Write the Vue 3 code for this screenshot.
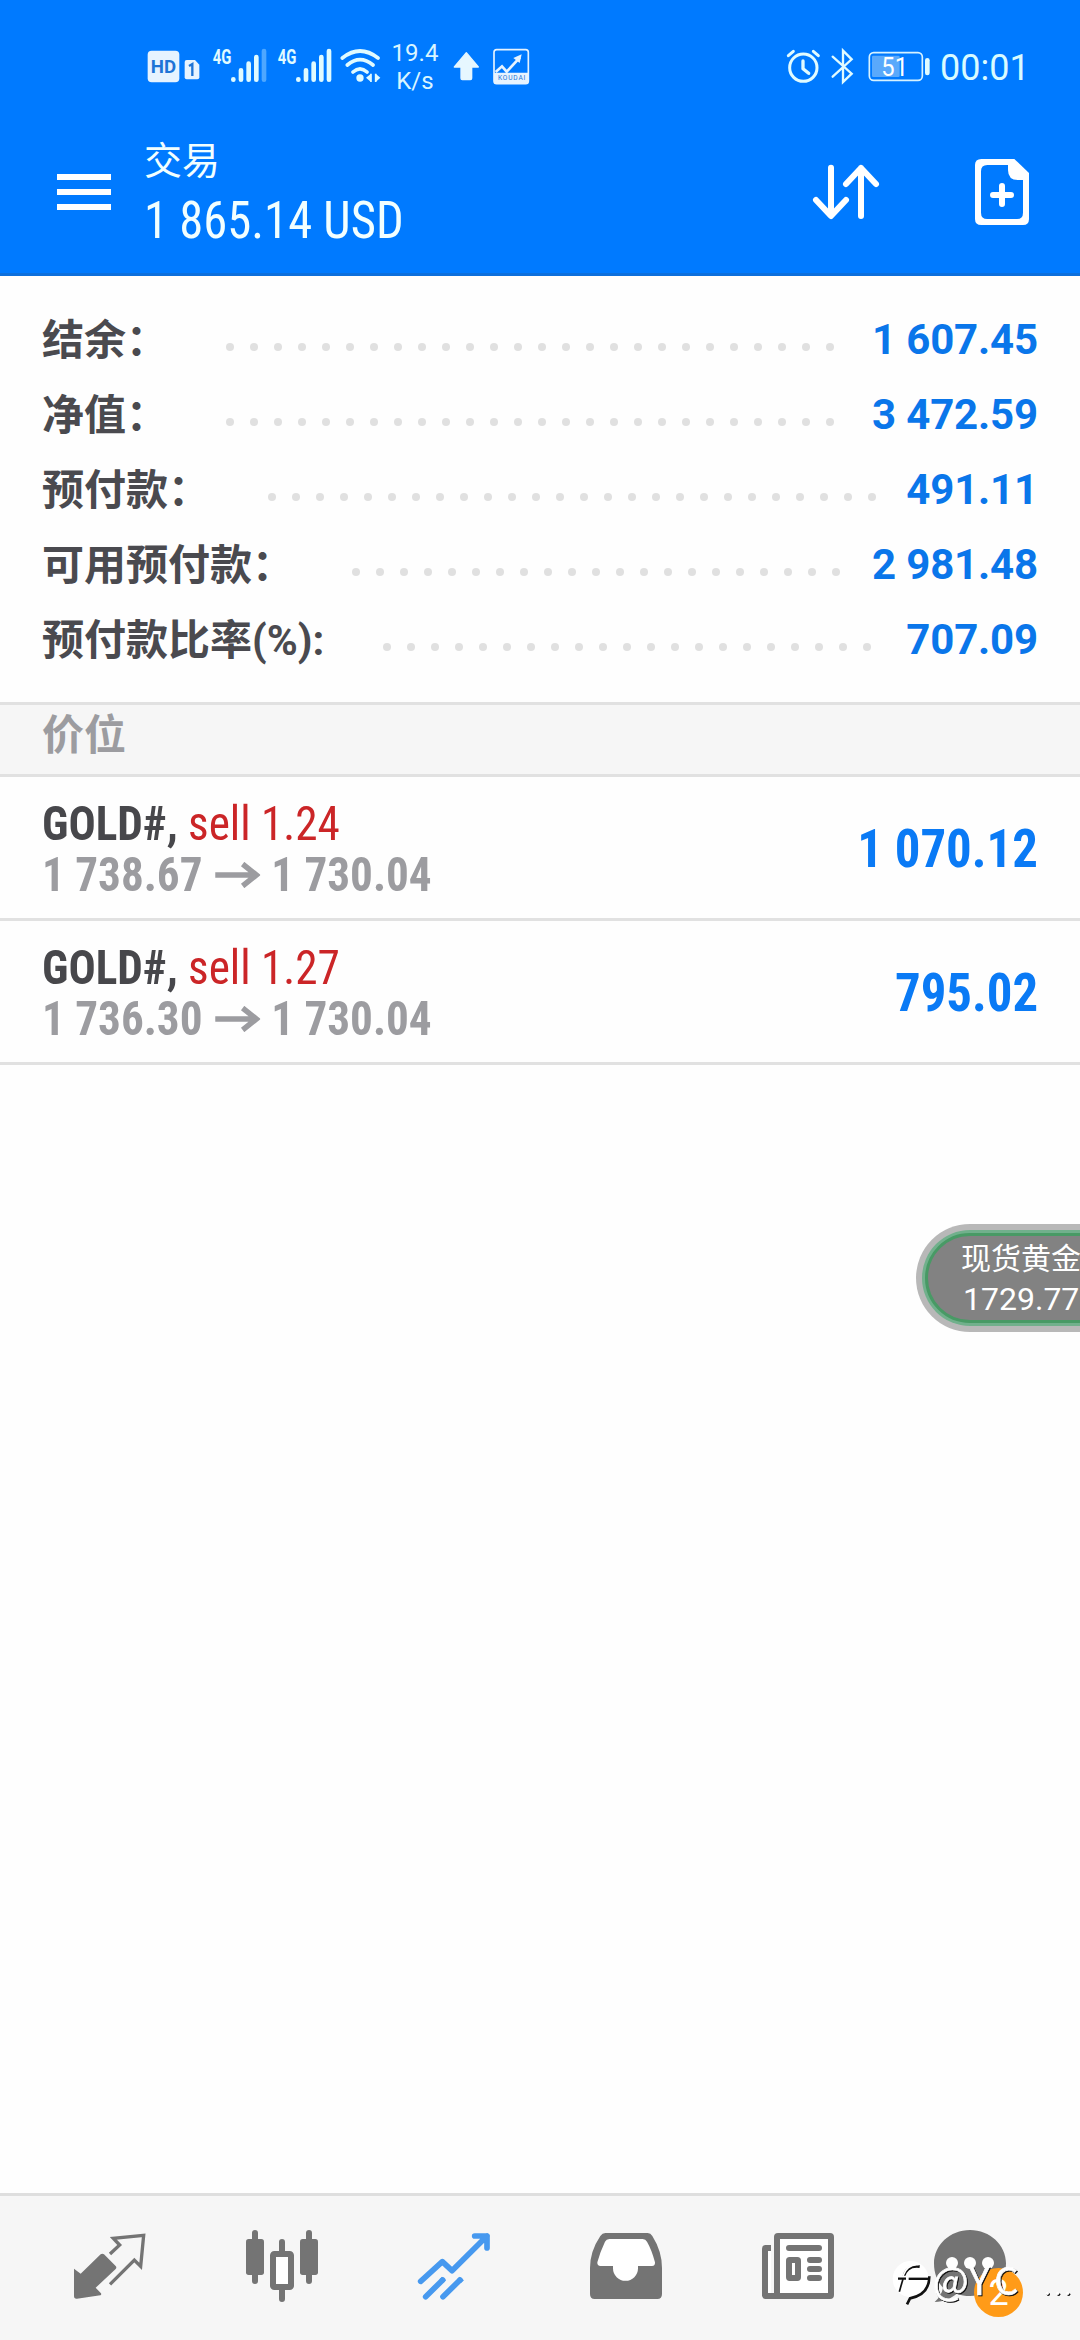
<script setup>
const summary = [
  { label: '结余：', value: '1 607.45', dots: 26, labelWidth: 184 },
  { label: '净值：', value: '3 472.59', dots: 26, labelWidth: 184 },
  { label: '预付款：', value: '491.11', dots: 26, labelWidth: 226 },
  { label: '可用预付款：', value: '2 981.48', dots: 21, labelWidth: 310 },
  { label: '预付款比率(%):', value: '707.09', dots: 21, labelWidth: 341 },
]
const positions = [
  { symbol: 'GOLD#,', side: 'sell 1.24', from: '1 738.67', to: '1 730.04', profit: '1 070.12' },
  { symbol: 'GOLD#,', side: 'sell 1.27', from: '1 736.30', to: '1 730.04', profit: '795.02' },
]
</script>

<template>
  <div class="screen">
    <header class="top">
      <div class="status">
        <svg class="hd" width="57" height="70" viewBox="45 0 171 210">
          <rect x="53" y="62" width="95" height="95" rx="12" fill="#e6f3ff" />
          <text x="100.500" y="129" font-size="56" font-weight="700" text-anchor="middle" textLength="76" lengthAdjust="spacingAndGlyphs" fill="#1e74d6">HD</text>
          <path d="M170 90h25l13 14v38q0 6-6 6h-32q-6 0-6-6v-46q0-6 6-6z" fill="#e6f3ff" />
          <path d="M177 108l10-6v36" fill="none" stroke="#1e74d6" stroke-width="7" />
        </svg>
        <svg v-for="n in 2" :key="n" class="signal" width="55" height="70" viewBox="246 0 165 210">
          <text x="248" y="101" font-size="60" font-weight="700" textLength="56" lengthAdjust="spacingAndGlyphs" fill="#e0fbff">4G</text>
          <g stroke="#e0fbff" stroke-width="14" stroke-linecap="round">
            <path d="M310 148v1M333 121v28M356 101v48M379 81v68" />
            <path d="M402 63v86" :opacity="n === 1 ? 0.35 : 1" />
          </g>
        </svg>
        <svg class="wifi" width="42" height="70" viewBox="630 0 126 210">
          <g fill="none" stroke="#e0fbff" stroke-width="11" stroke-linecap="round">
            <path d="M637 84Q690 42 744 84M652 105Q690 73 729 105M669 126Q690 107 711 126" />
          </g>
          <circle cx="690" cy="144" r="11" fill="#e0fbff" />
          <path d="M708 143l15-12v25zM737 131l14 12-14 13z" fill="#e0fbff" />
          <path d="M723 131v25M737 131v25" stroke="#e0fbff" stroke-width="5" />
        </svg>
        <div class="speed"><span>19.4</span><span>K/s</span></div>
        <svg class="upload" width="28" height="70" viewBox="966 0 84 210">
          <path d="M1009 68l36 43h-20v34q0 4-4 4h-24q-4 0-4-4v-34h-20z" fill="#e6f7ff" stroke="#e6f7ff" stroke-width="4" stroke-linejoin="round" />
        </svg>
        <svg class="koudai" width="37" height="70" viewBox="1089 0 111 210">
          <rect x="1092" y="59" width="103" height="102" rx="8" fill="none" stroke="#e6f3ff" stroke-width="5" />
          <path d="M1092 128h103v27q0 7-7 7h-89q-7 0-7-7z" fill="#e6f3ff" />
          <path d="M1097 126l19-17 14 16 40-43" fill="none" stroke="#e6f3ff" stroke-width="8" />
          <path d="M1150 84l25-11-6 26z" fill="#e6f3ff" />
          <text x="1145" y="150" font-size="20" text-anchor="middle" textLength="82" fill="#1e74d6">KOUDAI</text>
        </svg>
        <svg class="alarm" width="35" height="70" viewBox="78 0 105 210">
          <circle cx="130" cy="113" r="41" fill="none" stroke="#e0fbff" stroke-width="9" />
          <path d="M129 93v23l17 14" fill="none" stroke="#e0fbff" stroke-width="10" stroke-linecap="round" stroke-linejoin="round" />
          <path d="M85 77l15-13M160 64l15 13" stroke="#e0fbff" stroke-width="9" stroke-linecap="round" />
        </svg>
        <svg class="bt" width="25" height="70" viewBox="210 0 75 210">
          <path d="M218 80l57 51-26 25V62l26 26-57 52" fill="none" stroke="#e0fbff" stroke-width="7" stroke-linecap="round" />
        </svg>
        <svg class="battery" width="63" height="70" viewBox="324 0 189 210">
          <rect x="328" y="68" width="159" height="83" rx="13" fill="none" stroke="#d6f2ff" stroke-width="5" />
          <rect x="336" y="77" width="83" height="64" rx="4" fill="#5aa9fb" />
          <path d="M502 91v38" stroke="#e0fbff" stroke-width="14" stroke-linecap="round" />
          <text x="404" y="138" font-size="80" text-anchor="middle" textLength="80" lengthAdjust="spacingAndGlyphs" fill="#fff">51</text>
        </svg>
        <span class="clock">00:01</span>
      </div>
      <div class="toolbar">
        <div class="menu"><i></i><i></i><i></i></div>
        <div class="title">
          <span class="name">交易</span>
          <span class="equity cond">1 865.14 USD</span>
        </div>
        <svg class="sort" width="70" height="70" viewBox="93 81 210 210">
          <path d="M153 113v144M108 210l45 48 45-48M243 258V114M198 162l45-48 45 48" fill="none" stroke="#fff" stroke-width="18" stroke-linecap="round" stroke-linejoin="round" />
        </svg>
        <svg class="add" width="70" height="70" viewBox="561 81 210 210">
          <path d="M604 87h99l44 42v138q0 18-18 18H604q-19 0-19-18V105q0-18 19-18z" fill="#fff" />
          <path d="M622 105h62v15q0 30 30 30h15v98q0 19-18 19h-89q-19 0-19-19V124q0-19 19-19z" fill="#007aff" />
          <path d="M639 195h54M666 168v54" stroke="#fff" stroke-width="18" stroke-linecap="round" />
        </svg>
      </div>
    </header>

    <section class="summary">
      <div v-for="row in summary" :key="row.label" class="line">
        <span class="label" :style="{ width: row.labelWidth + 'px' }">{{ row.label }}</span>
        <span class="dots"><i v-for="d in row.dots" :key="d"></i></span>
        <span class="value">{{ row.value }}</span>
      </div>
    </section>

    <h2 class="section">价位</h2>
    <article v-for="p in positions" :key="p.profit" class="position">
      <div class="info cond">
        <div class="deal"><b>{{ p.symbol }}</b> <span>{{ p.side }}</span></div>
        <div class="prices">
          <span>{{ p.from }}</span>
          <svg width="48" height="26" viewBox="0 0 46 26" preserveAspectRatio="none"><path d="M0 13h42M28 2l14 11-14 11" fill="none" stroke="#9c9ca0" stroke-width="5.500" /></svg>
          <span>{{ p.to }}</span>
        </div>
      </div>
      <div class="profit cond">{{ p.profit }}</div>
    </article>

    <div class="ticker">
      <div class="ring"><div class="core">
        <span class="tname">现货黄金</span>
        <span class="tval">1729.77</span>
      </div></div>
    </div>

    <nav class="tabs">
      <svg viewBox="75 120 270 270">
        <path d="M102 266l20 15 60-58q5-4 10 0l35 35q4 5 0 9l-60 56 16 17q2 4-2 6l-70 10q-9 1-9-8z" fill="#747474" />
        <path d="M210 222l29-27-19-20 91-9-9 93-19-19-73 73" fill="none" stroke="#747474" stroke-width="10" />
      </svg>
      <svg viewBox="591 120 270 270" fill="#747474">
        <path d="M645 159v144M807 159v144M726 186v30M726 325v32" stroke="#747474" stroke-width="18" stroke-linecap="round" />
        <rect x="618" y="177" width="54" height="108" rx="8" /><rect x="780" y="177" width="54" height="108" rx="8" />
        <rect x="699" y="222" width="54" height="99" rx="4" fill="#fff" stroke="#747474" stroke-width="18" />
      </svg>
      <svg viewBox="1107 120 270 270">
        <path d="M1142 304l65-59 29 27 105-104M1304 168h37v36M1157 350l51-50M1209 350l51-50" fill="none" stroke="#4799ef" stroke-width="17" stroke-linecap="round" stroke-linejoin="round" />
        <path d="M1206 290l12 11-8 8-12-11zM1258 290l14 11-9 8-12-11z" fill="#4799ef" />
      </svg>
      <svg viewBox="63 120 270 270">
        <path d="M136 159h127q9 0 14 9 29 46 29 96v78q0 15-14 15H104q-14 0-14-15v-78q0-50 31-96 6-9 15-9z" fill="#747474" />
        <path d="M148 177h100q9 0 13 8 14 24 24 62 1 11-9 11h-42v7a37 37 0 0 1-75 0v-7h-37q-11 0-10-11 9-33 23-62 4-8 13-8z" fill="#fff" />
      </svg>
      <svg viewBox="579 120 270 270">
        <rect x="606" y="195" width="60" height="162" rx="11" fill="#747474" />
        <path d="M624 213h18v126h-18z" fill="#fff" /><path d="M633 190h9v149h-9z" fill="#f6f6f6" />
        <rect x="651" y="168" width="162" height="180" rx="3" fill="#fff" stroke="#747474" stroke-width="18" />
        <path d="M687 204h90M750 240h27M750 267h27M750 294h27" stroke="#747474" stroke-width="18" stroke-linecap="round" />
        <rect x="687" y="240" width="27" height="54" rx="2" fill="#fff" stroke="#747474" stroke-width="18" />
      </svg>
      <svg viewBox="1095 120 270 270">
        <path d="M1230 150c60 0 108 45 108 100s-48 98-108 98c-14 0-28-2-40-7-18 15-38 24-66 25 14-13 22-27 25-43-17-18-27-43-27-73 0-55 48-100 108-100z" fill="#747474" />
        <g fill="#fff"><circle cx="1176" cy="249" r="18" /><circle cx="1230" cy="249" r="18" /><circle cx="1284" cy="249" r="18" /></g>
      </svg>
      <span class="badge">2</span>
      <svg class="credit" width="187" height="80" viewBox="999 190 561 240">
        <circle cx="1052" cy="298" r="54" fill="#fff" />
        <g fill="none" stroke="#111">
          <path d="M1079 261Q1040 256 1031 292M1014 296h24M1046 297h62M1108 290Q1108 345 1050 356L1041 374" stroke-width="8" />
          <path d="M1029 298L1018 336" stroke-width="5" />
        </g>
        <path d="M1076 255Q1042 252 1029 288M1012 291h92" fill="none" stroke="#fff" stroke-width="5" />
        <g class="mark">
          <text x="1118" y="345">@</text><text x="1228" y="345">Y</text><text x="1303" y="345">C</text>
        </g>
        <g fill="#111"><circle cx="1465" cy="344" r="5" /><circle cx="1496" cy="344" r="5" /><circle cx="1526" cy="344" r="5" /></g>
        <g fill="#fff"><circle cx="1462" cy="341" r="5" /><circle cx="1493" cy="341" r="5" /><circle cx="1523" cy="341" r="5" /></g>
      </svg>
    </nav>
  </div>
</template>

<style>
body { margin: 0; background: #fefefe; }
</style>

<style scoped>
.screen { position: relative; display: flex; flex-direction: column; width: 1080px; height: 2340px; overflow: hidden; background: #fefefe; font-family: Roboto, "Noto Sans CJK SC", sans-serif; }
.screen * { box-sizing: border-box; }
svg { display: block; flex: none; }
.cond { font-stretch: 75%; white-space: pre; transform: scaleX(0.941); transform-origin: left; }
.top { height: 276px; flex: none; background: #007aff; border-bottom: 3px solid #0d6fdc; color: #f2ffff; }
.status { display: flex; height: 130px; padding: 30px 0 0 145px; }
.signal { margin-left: 10px; }
.wifi { margin-left: 8px; }
.speed { display: flex; flex-direction: column; width: 54px; margin: 9px 0 0 6px; text-align: center; font-size: 24px; line-height: 28px; color: #d9f5ff; }
.upload { margin-left: 10px; }
.koudai { margin-left: 13px; }
.alarm { margin-left: 256px; }
.bt { margin-left: 9px; }
.battery { margin-left: 13px; }
.clock { margin-left: 9px; height: 70px; font-size: 36px; line-height: 76px; color: #d9fbff; }
.toolbar { display: flex; height: 143px; padding-left: 57px; }
.menu { display: flex; flex: none; flex-direction: column; gap: 9px; width: 54px; padding-top: 44px; }
.menu i { height: 6px; background: #fff; }
.title { display: flex; flex: none; flex-direction: column; width: 660px; padding: 8px 0 0 33px; }
.name { font-size: 38px; line-height: 46px; }
.equity { font-size: 52px; line-height: 60px; padding-top: 7px; transform: scaleX(0.936); }
.sort { margin: 27px 0 0 40px; }
.add { margin: 27px 0 0 86px; }
.summary { height: 426px; flex: none; padding: 26px 42px 0; }
.line { display: flex; align-items: center; height: 75px; font-size: 42px; font-weight: 700; line-height: 75px; }
.label { flex: none; padding-top: 2px; color: #4a4a4f; white-space: nowrap; }
.dots { display: flex; gap: 16px; padding-top: 15px; }
.dots i { width: 8px; height: 8px; border-radius: 50%; background: #e0e0e0; }
.value { margin-left: auto; color: #0a76ea; letter-spacing: -0.15px; white-space: pre; }
.section { flex: none; height: 75px; margin: 0; padding-left: 42px; border: solid #e1e1e1; border-width: 3px 0; background: #f6f6f6; color: #9c9ca0; font-size: 42px; line-height: 61px; font-weight: 700; }
.position { display: flex; justify-content: space-between; flex: none; height: 144px; padding: 21px 42px 0; border-bottom: 3px solid #e1e1e1; font-size: 48px; line-height: 51px; }
.deal { color: #cb2527; }
.deal b { color: #47474b; }
.prices { display: flex; align-items: center; color: #9c9ca0; font-weight: 700; }
.prices svg { margin: 0 12px 0 13px; }
.profit { color: #0a7af5; font-size: 54px; font-weight: 700; line-height: 101px; transform-origin: right; }
.ticker { position: absolute; left: 916px; top: 1224px; width: 240px; height: 108px; padding: 6px; border-radius: 54px; background: #b8b8b8; }
.ring { height: 96px; padding: 3px; border-radius: 48px; background: #71b08c; }
.core { display: flex; flex-direction: column; height: 90px; padding: 6px 0 0 33px; border: 3px solid #489a65; border-radius: 45px; background: #828282; color: #fff; }
.tname { font-size: 30px; line-height: 34px; }
.tval { font-size: 32px; line-height: 47px; padding-left: 2px; }
.tabs { position: relative; display: flex; height: 147px; flex: none; margin-top: auto; padding: 24px 24px 0; border-top: 3px solid #dedede; background: #f6f6f6; }
.tabs > svg:not(.credit) { width: 90px; height: 90px; margin: 0 41px; }
.badge { position: absolute; left: 974px; top: 72px; width: 49px; height: 49px; border-radius: 50%; background: #ff9b18; color: #fff; font-size: 36px; line-height: 51px; text-align: center; }
.credit { position: absolute; left: 893px; top: 47px; overflow: visible; }
.mark { font-family: "Noto Sans CJK SC", sans-serif; font-size: 114px; fill: #fff; stroke: #fff; stroke-width: 2px; filter: drop-shadow(3px 3px 0 #111); }
</style>
